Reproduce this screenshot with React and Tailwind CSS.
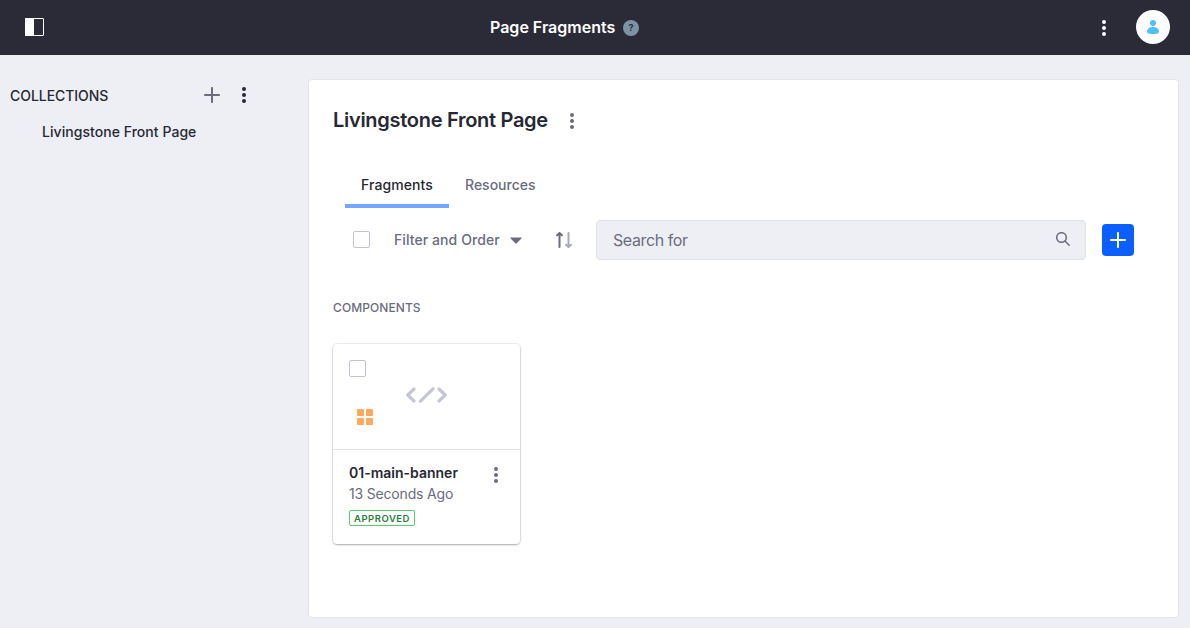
function Kebab({ className = "" }) {
  return (
    <svg viewBox="0 0 16 16" className={`h-4 w-4 shrink-0 fill-current ${className}`}>
      <circle cx="8" cy="2" r="2" />
      <circle cx="8" cy="8" r="2" />
      <circle cx="8" cy="14" r="2" />
    </svg>
  );
}

function Plus({ className = "" }) {
  return (
    <svg viewBox="0 0 16 16" className={`h-4 w-4 shrink-0 fill-current ${className}`}>
      <path d="M15 7H9V1c0-1.33-2-1.33-2 0v6H1c-1.33 0-1.33 2 0 2h6v6c0 1.33 2 1.33 2 0V9h6c1.33 0 1.33-2 0-2z" />
    </svg>
  );
}

function Checkbox({ className = "" }) {
  return <span className={`block h-[17px] w-[17px] shrink-0 rounded-[2px] border border-[#c2c2d4] bg-white ${className}`} />;
}

function Header() {
  return (
    <header className="flex h-[55px] items-center bg-[#2b2b38] pr-5 pb-px pl-[25px] text-white">
      <svg viewBox="0 0 19 18" className="h-[18px] w-[19px] shrink-0">
        <rect x="0.5" y="0.5" width="18" height="17" rx="0.5" fill="none" stroke="currentColor" />
        <rect x="0" y="0" width="9" height="18" rx="0.5" fill="currentColor" />
      </svg>
      <h1 className="ml-[446px] w-[125px] text-[16px] leading-6 font-semibold whitespace-nowrap">Page Fragments</h1>
      <span className="mt-px ml-2 flex h-4 w-4 items-center justify-center rounded-full bg-[#7d93a5] text-[9px] leading-none font-bold text-[#2b2b38]">?</span>
      <Kebab className="mt-[2px] ml-auto" />
      <span className="ml-6 flex h-[34px] w-[34px] items-center justify-center rounded-full bg-white">
        <svg viewBox="0 0 12 14" className="h-[14px] w-3 fill-[#50bfff]">
          <circle cx="6" cy="3" r="3" />
          <path d="M6 7C2.4 7 0 8.9 0 11.5 0 13.200 1.700 14 6 14s6-.8 6-2.500C12 8.900 9.600 7 6 7z" />
        </svg>
      </span>
    </header>
  );
}

function Sidebar() {
  return (
    <aside className="w-[308px] shrink-0 pt-[29px] pl-[10px] text-[14px] leading-[22px] text-[#272833]">
      <div className="flex h-[22px] items-center">
        <h2 className="w-[194px] pt-[2px] font-medium tracking-[-0.05px]">COLLECTIONS</h2>
        <Plus className="text-[#6b6c7e]" />
        <Kebab className="ml-4" />
      </div>
      <div className="mt-[15px] pl-8 font-medium tracking-[0.05px] whitespace-nowrap">Livingstone Front Page</div>
    </aside>
  );
}

function Toolbar() {
  return (
    <div className="mt-3 flex h-10 items-center pl-5">
      <Checkbox className="mb-px" />
      <button className="ml-6 flex items-center text-[14px] leading-5 font-medium text-[#6b6c7e]">
        <span className="w-[106px] pb-px text-left tracking-[0.08px] whitespace-nowrap">Filter and Order</span>
        <svg viewBox="0 0 12 7" className="ml-[10px] h-[7px] w-3 fill-current">
          <path d="M1 .5h10c.6 0 .8.600.4 1L6.700 6.200a1 1 0 0 1-1.400 0L.6 1.500C.2 1.100.4.500 1 .500z" />
        </svg>
      </button>
      <svg viewBox="0 0 18 16" className="ml-[33px] h-4 w-[18px] shrink-0" fill="none" strokeLinecap="round" strokeLinejoin="round">
        <path d="M4.500 15V2M2.100 3.300 4.500 1l2.400 2.300" stroke="#6b6c7e" strokeWidth="2" />
        <path d="M13.500 1v13M11.100 12.700 13.500 15l2.400-2.300" stroke="#a7a9bc" strokeWidth="2" />
      </svg>
      <div className="ml-[23px] flex h-10 w-[490px] shrink-0 items-center justify-between rounded border border-[#e1e2e9] bg-[#eeeff4] pr-[15px] pl-4 text-[16px] tracking-[-0.4px] text-[#6b6c7e]">
        <span>Search for</span>
        <svg viewBox="0 0 14 14" className="mb-[2px] h-[14px] w-[14px]" fill="none" stroke="currentColor" strokeWidth="1.500" strokeLinecap="round">
          <circle cx="5.500" cy="5.500" r="4.800" />
          <path d="m9 9 4.200 4.200" />
        </svg>
      </div>
      <button className="ml-4 flex h-8 w-8 shrink-0 items-center justify-center rounded bg-[#0b5fff] text-white">
        <Plus />
      </button>
    </div>
  );
}

function FragmentCard() {
  return (
    <article className="mt-[26px] h-[200px] w-[187px] rounded shadow-[0_0_0_1px_rgba(0,0,0,0.06),0_1px_3px_-1px_rgba(0,0,0,0.6)]">
      <div className="flex h-[106px] border-b border-[#e3e4e8] pt-4 pl-4">
        <div>
          <Checkbox />
          <svg viewBox="0 0 16 16" className="mt-8 ml-2 h-4 w-4 fill-[#ffa95e]">
            <rect width="7" height="7" rx="0.8" />
            <rect x="9" width="7" height="7" rx="0.8" />
            <rect y="9" width="7" height="7" rx="0.8" />
            <rect x="9" y="9" width="7" height="7" rx="0.8" />
          </svg>
        </div>
        <svg viewBox="0 0 42 16" className="mt-[27px] ml-[33px] h-4 w-[42px]" fill="none" stroke="#c5c6d6" strokeWidth="3.200" strokeLinecap="round" strokeLinejoin="round">
          <path d="M8 2 1.800 8 8 14M14.500 14.200 27 1.800M33 2l6.200 6-6.200 6" />
        </svg>
      </div>
      <div className="flex justify-between pt-3 pr-4 pl-4">
        <div>
          <div className="text-[14px] leading-[21px] font-semibold whitespace-nowrap text-[#272833]">01-main-banner</div>
          <div className="text-[14px] leading-[21px] tracking-[-0.18px] whitespace-nowrap text-[#6b6c7e]">13 Seconds Ago</div>
          <div className="mt-[6px] flex h-4 w-[66px] items-center justify-center rounded-[2px] border border-[#5aca75] pt-px text-[9.500px] leading-none font-semibold tracking-[0.5px] text-[#287d3c]">APPROVED</div>
        </div>
        <Kebab className="mt-[5px] text-[#6b6c7e]" />
      </div>
    </article>
  );
}

export default function App() {
  return (
    <div className="flex h-[628px] w-[1190px] flex-col overflow-hidden bg-[#eeeff4] font-['Inter',sans-serif] antialiased">
      <Header />
      <div className="flex flex-1">
        <Sidebar />
        <main className="mt-6 h-[539px] w-[871px] rounded border border-[#e3e4ea] bg-white px-6 pt-6">
          <div className="flex h-8 items-center">
            <h2 className="w-[215px] text-[20px] font-semibold tracking-[-0.29px] whitespace-nowrap text-[#272833]">Livingstone Front Page</h2>
            <Kebab className="mt-[2px] ml-4 text-[#6b6c7e]" />
          </div>
          <nav className="mt-[29px] flex h-[43px] pl-3 text-[14px] leading-10 font-medium">
            <div className="h-[43px] w-[104px] border-b-4 border-[#75a5ff] text-center tracking-[0.08px] text-[#272833]">Fragments</div>
            <div className="pl-4 text-[#6b6c7e]">Resources</div>
          </nav>
          <Toolbar />
          <h3 className="mt-[38px] text-[12px] leading-5 font-medium tracking-[0.08px] text-[#6b6c7e]">COMPONENTS</h3>
          <FragmentCard />
        </main>
      </div>
    </div>
  );
}
